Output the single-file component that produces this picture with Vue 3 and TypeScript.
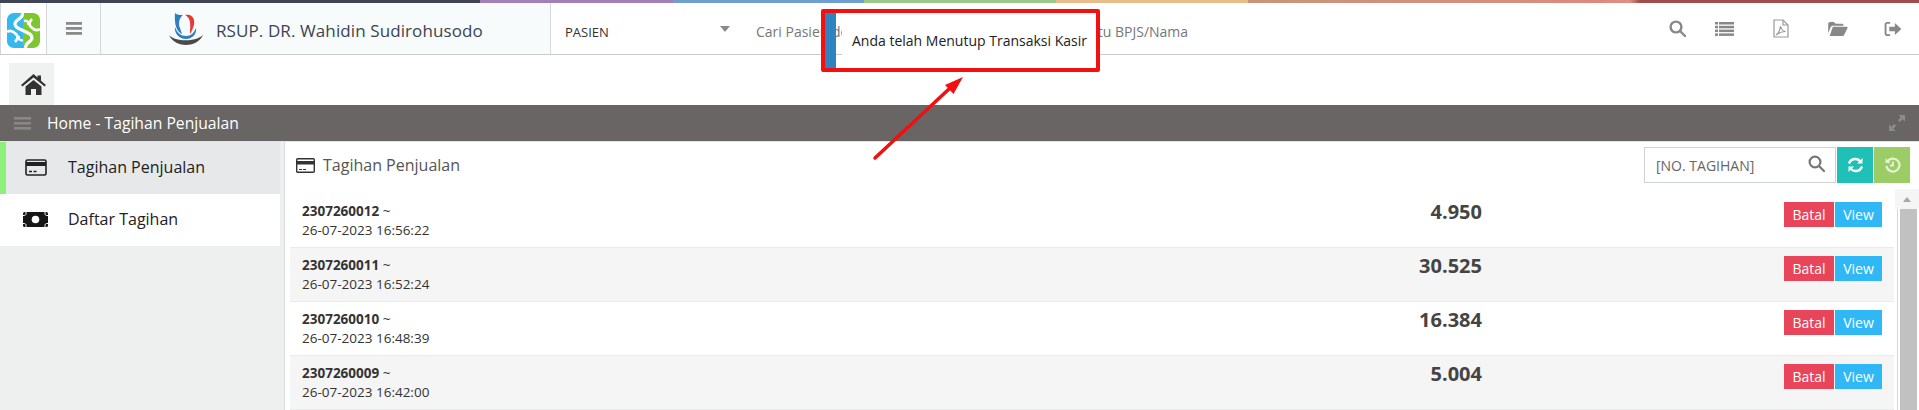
<script setup lang="ts">
interface Tagihan {
  no: string
  tanggal: string
  total: string
}

const tagihan: Tagihan[] = [
  { no: '2307260012', tanggal: '26-07-2023 16:56:22', total: '4.950' },
  { no: '2307260011', tanggal: '26-07-2023 16:52:24', total: '30.525' },
  { no: '2307260010', tanggal: '26-07-2023 16:48:39', total: '16.384' },
  { no: '2307260009', tanggal: '26-07-2023 16:42:00', total: '5.004' }
]
</script>

<template>
  <div class="page">
    <div class="rainbow"></div>

    <header class="topbar">
      <div class="logo-cell">
        <svg width="33" height="35" viewBox="0 0 33 35" fill="none">
          <path d="M7 0h10v35H7c-4 0-7-3-7-7V7c0-4 3-7 7-7z" fill="#35b8ee" />
          <path d="M16 0h10c4 0 7 3 7 7v21c0 4-3 7-7 7H16z" fill="#7cc62e" />
          <path d="M15 0c3 5-7 6-7 11 0 4 5 5 9 7 4 2 8 3 8 7 0 4-8 5-6 10" stroke="#fff" stroke-width="3.200" />
          <path d="M0 19c4-3 7 0 9 2 3 3 1 6-1 8M33 16c-4 3-7 0-9-2-3-3-1-6 1-8" stroke="#fff" stroke-width="2.600" />
          <path d="M17 8c3-1 5 1 4 4M16 27c-3 1-5-1-4-4" stroke="#fff" stroke-width="2.400" />
        </svg>
      </div>
      <div class="menu-cell">
        <svg width="16" height="13" viewBox="0 0 16 13" fill="#8a8a8a">
          <rect width="16" height="2.800" />
          <rect y="5" width="16" height="2.800" />
          <rect y="10" width="16" height="2.800" />
        </svg>
      </div>
      <div class="brand-cell">
        <svg width="34" height="32" viewBox="0 0 34 32">
          <path d="M6 0c2 2 5 2 8 2-4 3-5 9-3 13l2 6C8 19 5 12 6 0z" fill="#2f7fc0" />
          <path d="M16 2c5-1 8 1 9 5 1 5-2 11-4 14 0-5 1-11-1-15-1-2-2-3-4-4z" fill="#e8392f" />
          <path d="M6 14c2 6 6 9 11 9s8-3 10-8c1 5-3 11-10 11S5 20 6 14z" fill="#2f7fc0" />
          <path d="M0 22c6 7 27 7 34 0-3 7-11 10-17 10S3 29 0 22z" fill="#4a4a4a" />
        </svg>
        <span class="brand-name">RSUP. DR. Wahidin Sudirohusodo</span>
      </div>
      <div class="unit-cell">
        <span>PASIEN</span>
        <i class="caret"></i>
      </div>
      <div class="search-cell">Cari Pasien dengan No. RM/No. Pendaftaran/No. Kartu BPJS/Nama</div>
      <div class="tools">
        <svg class="tool-search" width="17" height="17" viewBox="0 0 17 17" fill="none" stroke="#888" stroke-width="2.400">
          <circle cx="7" cy="7" r="5.400" />
          <path d="M11 11l5 5" stroke-linecap="round" />
        </svg>
        <svg class="tool-list" width="19" height="14" viewBox="0 0 19 14" fill="#888">
          <rect width="3" height="2.500" />
          <rect x="4" width="15" height="2.500" />
          <rect y="3.800" width="3" height="2.500" />
          <rect x="4" y="3.800" width="15" height="2.500" />
          <rect y="7.600" width="3" height="2.500" />
          <rect x="4" y="7.600" width="15" height="2.500" />
          <rect y="11.400" width="3" height="2.500" />
          <rect x="4" y="11.400" width="15" height="2.500" />
        </svg>
        <svg class="tool-pdf" width="16" height="19" viewBox="0 0 16 19" fill="none" stroke="#999" stroke-width="1.200">
          <path d="M1 1h9l5 5v12H1z" />
          <path d="M10 1v5h5" />
          <path d="M3 16c3-2 4-5 4.500-9 .5 3 2 5 5 5.500-3 0-6 1-9.500 3.500z" />
        </svg>
        <svg class="tool-folder" width="20" height="14" viewBox="0 0 21 15" fill="#888">
          <path d="M0 2c0-1 1-2 2-2h4l2 2h7c1 0 1.500 1 1.500 2H5c-1 0-2 .5-2.500 2L0 12z" />
          <path d="M5 5h15c1 0 1 1 .7 1.500L17 14c-.3.600-1 1-1.500 1H1.500z" />
        </svg>
        <svg class="tool-exit" width="18" height="14" viewBox="0 0 18 15" fill="#888">
          <path d="M6 0v2H3c-.5 0-1 .5-1 1v9c0 .5.500 1 1 1h3v2H3c-2 0-3-1-3-3V3c0-2 1-3 3-3z" />
          <path d="M11 1l7 6.500-7 6.500v-4H5V5h6z" />
        </svg>
      </div>
    </header>

    <div class="tabs">
      <div class="home-tab">
        <svg width="25" height="21" viewBox="0 0 25 21" fill="#333">
          <path d="M12.500 0l4 3.600V1.500h3.500v5.300l5 4.200-1.400 1.600L12.500 3.500 1.400 12.600 0 11z" />
          <path d="M4.500 12.500l8-6.500 8 6.500V21H15v-6h-5v6H4.500z" />
        </svg>
      </div>
    </div>

    <div class="crumb">
      <div class="crumb-left">
        <svg width="17" height="13" viewBox="0 0 17 13" fill="#8a8786">
          <rect width="17" height="2.600" />
          <rect y="5" width="17" height="2.600" />
          <rect y="10" width="17" height="2.600" />
        </svg>
        <span>Home - Tagihan Penjualan</span>
      </div>
      <svg width="16" height="16" viewBox="0 0 17 17" fill="#8e8b8a">
        <path d="M10 0h7v7l-2.500-2.500-3 3-2-2 3-3z" />
        <path d="M7 17H0v-7l2.500 2.500 3-3 2 2-3 3z" />
      </svg>
    </div>

    <div class="body">
      <aside class="side">
        <div class="side-item active">
          <svg width="22" height="17" viewBox="0 0 22 17">
            <rect x="1" y="1" width="20" height="15" rx="1.500" fill="none" stroke="#222" stroke-width="1.600" />
            <rect x="1" y="3" width="20" height="4" fill="#222" />
            <path d="M4 12.500h3M8.500 12.500h3" stroke="#222" stroke-width="1.300" />
          </svg>
          <span>Tagihan Penjualan</span>
        </div>
        <div class="side-item">
          <svg width="25" height="15" viewBox="0 0 25 15">
            <rect width="25" height="15" rx="1.500" fill="#161616" />
            <circle cx="12.500" cy="7.500" r="3.800" fill="#fff" />
            <path d="M0 3.500h1.500c.8 0 1.500-.7 1.500-2V0M25 3.500h-1.500c-.8 0-1.500-.7-1.500-2V0M0 11.500h1.500c.8 0 1.500.7 1.500 2V15M25 11.500h-1.500c-.8 0-1.500.7-1.500 2V15" stroke="#fff" fill="none" />
          </svg>
          <span>Daftar Tagihan</span>
        </div>
      </aside>

      <main class="content">
        <div class="content-head">
          <div class="content-title">
            <svg width="19" height="15" viewBox="0 0 19 15">
              <rect x=".7" y=".7" width="17.600" height="13.600" rx="1" fill="none" stroke="#333" stroke-width="1.400" />
              <rect x="1" y="3" width="17" height="3.500" fill="#333" />
              <path d="M3 11.500h3M7 11.500h3" stroke="#333" stroke-width="1.200" />
            </svg>
            <span>Tagihan Penjualan</span>
          </div>
          <div class="filters">
            <div class="filter-box">
              <span>[NO. TAGIHAN]</span>
              <svg class="filter-icon" width="17" height="17" viewBox="0 0 17 17" fill="none" stroke="#777" stroke-width="2.200">
                <circle cx="7" cy="7" r="5.400" />
                <path d="M11 11l5 5" stroke-linecap="round" />
              </svg>
            </div>
            <button class="square teal">
              <svg width="17" height="16" viewBox="0 0 17 16" fill="none" stroke="#fff" stroke-width="2.400">
                <path d="M2 6.500C3 3.500 5.500 2 8.500 2c2 0 3.500 1 4.500 2" />
                <path d="M15 9.500C14 12.500 11.500 14 8.500 14c-2 0-3.500-1-4.500-2" />
                <path d="M15.500 1v5.500H10z" fill="#fff" stroke="none" />
                <path d="M1.500 15V9.500H7z" fill="#fff" stroke="none" />
              </svg>
            </button>
            <button class="square green">
              <svg width="17" height="16" viewBox="0 0 16 16" fill="none" stroke="#e4f2d4" stroke-width="2.200">
                <path d="M3 4.500A6.500 6.500 0 1 1 2 9" />
                <path d="M1 1v5h5z" fill="#e4f2d4" stroke="none" />
                <path d="M8.500 4.500V8.500H5.500" stroke-width="1.800" />
              </svg>
            </button>
          </div>
        </div>

        <div class="list-wrap">
          <div class="list">
            <div v-for="row in tagihan" :key="row.no" class="row">
              <div class="row-info">
                <b>{{ row.no }}</b> ~<br />{{ row.tanggal }}
              </div>
              <div class="row-total">{{ row.total }}</div>
              <div class="row-actions">
                <button class="act batal">Batal</button>
                <button class="act view">View</button>
              </div>
            </div>
          </div>
          <div class="scrollbar">
            <div class="scroll-up"><i></i></div>
            <div class="scroll-track">
              <div class="scroll-thumb"></div>
            </div>
          </div>
        </div>
      </main>
    </div>

    <div class="toast">
      <i class="toast-bar"></i>
      <span class="toast-text">Anda telah Menutup Transaksi Kasir</span>
    </div>

    <svg class="arrow" width="100" height="95" viewBox="0 0 100 95">
      <path d="M5 88L79 19" stroke="#f01010" stroke-width="3.500" stroke-linecap="round" />
      <path d="M93 7L83.500 24 75 15z" fill="#f01010" />
    </svg>
  </div>
</template>

<style>
html,
body {
  margin: 0;
  background: #ffffff;
  overflow: hidden;
}
</style>

<style scoped>
.page {
  position: relative;
  width: 1919px;
  height: 410px;
  overflow: hidden;
  font-family: "Open Sans", "Noto Sans", sans-serif;
  color: #333333;
}

.page * {
  box-sizing: border-box;
}

.rainbow {
  height: 3px;
  background: linear-gradient(
    to right,
    #3f4555 0,
    #3f4555 480px,
    #a27fb8 480px,
    #a27fb8 673px,
    #6f9fce 673px,
    #6f9fce 864px,
    #9cc98a 864px,
    #9cc98a 1056px,
    #e8bd8a 1056px,
    #e8bd8a 1248px,
    #c8957a 1248px,
    #dc8a80 1598px,
    #e08f84 1630px,
    #9e4c4c 1640px
  );
}

.topbar {
  display: flex;
  height: 52px;
  border-bottom: 1px solid #cccccc;
  align-items: stretch;
}

.logo-cell {
  width: 47px;
  display: flex;
  align-items: center;
  justify-content: center;
  border-right: 1px solid #d5d8d8;
  border-left: 1px solid #d5d8d8;
  padding-top: 4px;
}

.menu-cell {
  width: 54px;
  display: flex;
  align-items: center;
  justify-content: center;
  background: #f7fbfc;
  border-right: 1px solid #d5d8d8;
}

.brand-cell {
  width: 450px;
  display: flex;
  align-items: center;
  gap: 13px;
  padding-left: 68px;
  background: #f7fbfc;
  border-right: 1px solid #d5d8d8;
}

.brand-name {
  font-size: 17px;
  letter-spacing: 0.1px;
  color: #3c4450;
  padding-top: 4px;
}

.unit-cell {
  width: 180px;
  padding: 6px 1px 0 14px;
  display: flex;
  align-items: center;
  justify-content: space-between;
  font-size: 13px;
  color: #333333;
}

.caret {
  width: 0;
  height: 0;
  border-left: 5.500px solid transparent;
  border-right: 5.500px solid transparent;
  border-top: 6px solid #8a8a8a;
  margin-bottom: 5px;
}

.search-cell {
  padding: 5px 0 0 25px;
  display: flex;
  align-items: center;
  font-size: 14px;
  color: #777777;
  white-space: nowrap;
}

.tools {
  margin-left: auto;
  display: flex;
  align-items: center;
  padding: 0 17px 0 0;
}

.tool-list {
  margin-left: 29px;
}

.tool-pdf {
  margin-left: 39px;
}

.tool-folder {
  margin-left: 39px;
}

.tool-exit {
  margin-left: 36px;
}

.tabs {
  height: 50px;
  padding-left: 9px;
  display: flex;
  align-items: flex-end;
}

.home-tab {
  width: 45px;
  height: 42px;
  padding-left: 4px;
  background: #f0f2f2;
  display: flex;
  align-items: center;
  justify-content: center;
}

.crumb {
  height: 36px;
  background: #696564;
  display: flex;
  align-items: center;
  justify-content: space-between;
  padding: 0 14px 0 14px;
  color: #ffffff;
  font-size: 15.700px;
}

.crumb-left {
  display: flex;
  align-items: center;
  gap: 16px;
}

.body {
  display: flex;
  height: 269px;
  border-top: 1px solid #e3e3e3;
}

.side {
  width: 285px;
  background: #eef0f0;
  border-right: 1px solid #d9dcdc;
  padding-right: 4px;
  flex-shrink: 0;
}

.side-item {
  height: 52px;
  padding-bottom: 2px;
  display: flex;
  align-items: center;
  background: #ffffff;
  color: #222222;
  font-size: 16px;
}

.side-item svg {
  margin: 0 20px 0 23px;
}

.side-item.active {
  background: #e6e8e9;
  border-left: 6px solid #8ef07a;
}

.side-item.active svg {
  margin: 0 21px 0 19px;
}

.content {
  flex: 1;
  min-width: 0;
  display: flex;
  flex-direction: column;
}

.content-head {
  height: 52px;
  flex-shrink: 0;
  display: flex;
  justify-content: space-between;
  align-items: flex-start;
  padding: 5px 9px 0 11px;
}

.content-title {
  display: flex;
  align-items: center;
  gap: 8px;
  font-size: 16px;
  color: #555555;
  padding-top: 7px;
}

.filters {
  display: flex;
  gap: 1px;
}

.filter-box {
  width: 192px;
  height: 36px;
  border: 1px solid #cfd3d3;
  display: flex;
  align-items: center;
  justify-content: space-between;
  padding: 0 10px 0 11px;
  font-size: 14px;
  color: #666666;
}

.filter-icon {
  margin-bottom: 3px;
}

.square {
  width: 36px;
  height: 36px;
  border: none;
  padding: 0;
  display: flex;
  align-items: center;
  justify-content: center;
}

.teal {
  background: #1fc0b6;
}

.green {
  background: #9ccc65;
}

.list-wrap {
  flex: 1;
  display: flex;
  min-height: 0;
  padding-left: 5px;
}

.list {
  flex: 1;
  min-width: 0;
}

.row {
  height: 54px;
  border-bottom: 1px solid #e9ebeb;
  display: flex;
  align-items: flex-start;
  padding: 0 12px;
  font-size: 13.500px;
  line-height: 19px;
  color: #333333;
}

.row:nth-child(even) {
  background: #f5f5f5;
}

.row-info {
  padding-top: 8px;
  width: 800px;
  flex-shrink: 0;
}

.row-total {
  width: 380px;
  flex-shrink: 0;
  padding-top: 6px;
  text-align: right;
  font-size: 20px;
  font-weight: 700;
  line-height: 24px;
  color: #444444;
}

.row-actions {
  margin-left: auto;
  padding-top: 8px;
  display: flex;
  gap: 1px;
}

.act {
  height: 25px;
  border: none;
  padding: 0;
  color: #ffffff;
  font-family: inherit;
  font-size: 14px;
}

.batal {
  width: 50px;
  background: #e8445a;
}

.view {
  width: 47px;
  background: #2fb8f5;
}

.scrollbar {
  width: 25px;
  flex-shrink: 0;
  margin-top: -5px;
  display: flex;
  flex-direction: column;
}

.scroll-up {
  height: 20px;
  margin-left: 1px;
  display: flex;
  align-items: center;
  justify-content: center;
  background: #f5f5f5;
}

.scroll-up i {
  width: 0;
  height: 0;
  border-left: 4.500px solid transparent;
  border-right: 4.500px solid transparent;
  border-bottom: 5px solid #a8a8a8;
}

.scroll-track {
  flex: 1;
  margin-left: 3px;
  padding-left: 2px;
  border-left: 1px solid #d9d9d9;
}

.scroll-thumb {
  width: 17px;
  height: 100%;
  background: #c1c1c1;
}

.toast {
  position: absolute;
  left: 821px;
  top: 9px;
  width: 279px;
  height: 63px;
  border: 4px solid #f51010;
  border-radius: 2px;
  display: flex;
  align-items: center;
  font-size: 14px;
  color: #222222;
}

.toast-bar {
  width: 11px;
  height: 100%;
  background: #2e83c0;
  flex-shrink: 0;
}

.toast-text {
  flex: 1;
  height: 100%;
  margin-left: 6px;
  padding-left: 10px;
  background: #ffffff;
  display: flex;
  align-items: center;
  white-space: nowrap;
}

.arrow {
  position: absolute;
  left: 870px;
  top: 70px;
}
</style>
